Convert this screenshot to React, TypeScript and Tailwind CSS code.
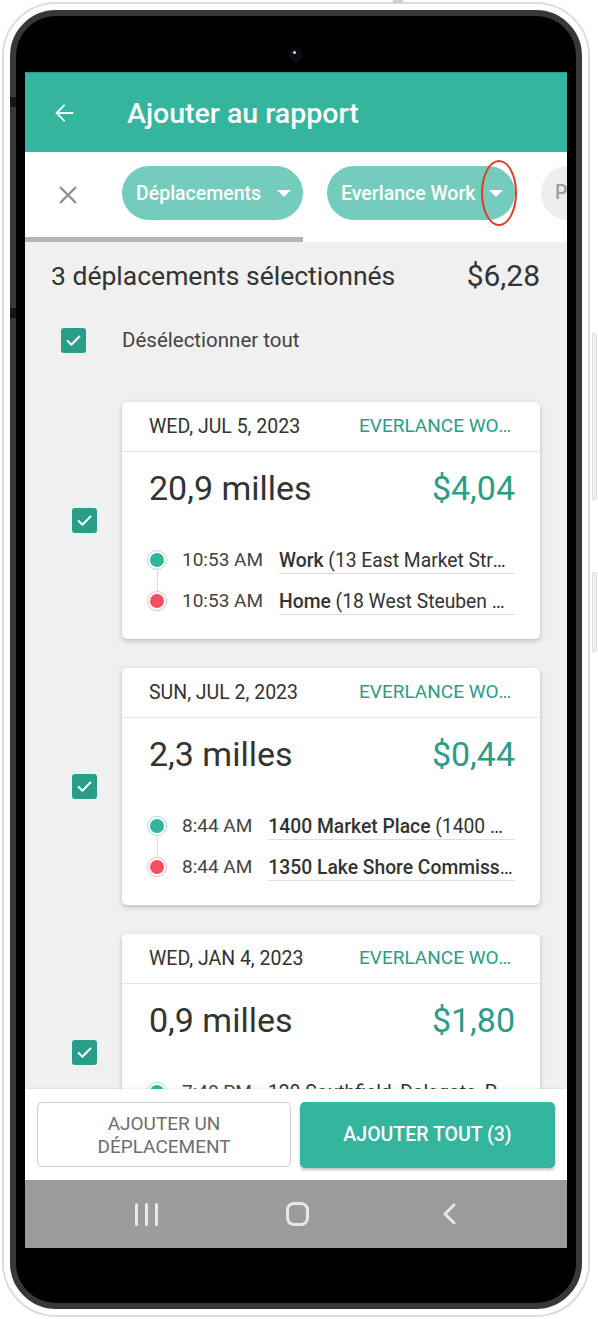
import React from 'react';

type Stop = { time: string; name: string; rest: string; kind: 'start' | 'end' };
type Trip = { date: string; tag: string; miles: string; amount: string; stops: Stop[] };

const trips: Trip[] = [
  {
    date: 'WED, JUL 5, 2023',
    tag: 'EVERLANCE WORK',
    miles: '20,9 milles',
    amount: '$4,04',
    stops: [
      { time: '10:53 AM', name: 'Work', rest: ' (13 East Market Street, Corning, NY)', kind: 'start' },
      { time: '10:53 AM', name: 'Home', rest: ' (18 West Steuben Street, Bath, NY)', kind: 'end' },
    ],
  },
  {
    date: 'SUN, JUL 2, 2023',
    tag: 'EVERLANCE WORK',
    miles: '2,3 milles',
    amount: '$0,44',
    stops: [
      { time: '8:44 AM', name: '1400 Market Place', rest: ' (1400 Market Place, Corning, NY)', kind: 'start' },
      { time: '8:44 AM', name: '1350 Lake Shore Commissary', rest: '', kind: 'end' },
    ],
  },
  {
    date: 'WED, JAN 4, 2023',
    tag: 'EVERLANCE WORK',
    miles: '0,9 milles',
    amount: '$1,80',
    stops: [
      { time: '7:40 PM', name: '', rest: '120 Southfield, Dalegate, Pennsylvania', kind: 'start' },
      { time: '7:40 PM', name: '', rest: '95 Northfield Road, Dalegate', kind: 'end' },
    ],
  },
];

const CheckBox: React.FC<{ className?: string }> = ({ className }) => (
  <div className={`flex size-[25px] shrink-0 items-center justify-center rounded-[3px] bg-[#2a9d89] ${className ?? ''}`}>
    <svg width="19" height="19" viewBox="0 0 24 24" fill="none">
      <path d="M4.5 12.5l4.8 4.8L19.5 7" stroke="white" strokeWidth="2.6" strokeLinecap="round" strokeLinejoin="round" />
    </svg>
  </div>
);

const Dot: React.FC<{ kind: 'start' | 'end' }> = ({ kind }) => (
  <div
    className={`flex size-[20px] shrink-0 items-center justify-center rounded-full border bg-white ${
      kind === 'start' ? 'border-[#a6ded3]' : 'border-[#f6b9c1]'
    }`}
  >
    <div className={`size-[14px] rounded-full ${kind === 'start' ? 'bg-[#2fb59c]' : 'bg-[#f54d62]'}`} />
  </div>
);

const TripCard: React.FC<{ trip: Trip }> = ({ trip }) => (
  <div className="flex items-center">
    <div className="flex w-[97px] shrink-0 justify-end pr-[25px]">
      <CheckBox />
    </div>
    <div className="h-[237px] w-[418px] shrink-0 rounded-[5px] bg-white shadow-[0_2px_5px_rgba(0,0,0,0.22)]">
      <div className="flex h-[50px] items-center justify-between border-b border-[#e6e6e6] pl-[27px] pr-[25px]">
        <span className="text-[19.5px] text-[#333]">{trip.date}</span>
        <span className="w-[156px] truncate text-right text-[19px] text-[#2a9d89]">{trip.tag}</span>
      </div>
      <div className="flex items-center justify-between pl-[27px] pr-[25px] pt-[16px]">
        <span className="text-[34px] leading-[40px] text-[#333]">{trip.miles}</span>
        <span className="text-[34px] leading-[40px] text-[#2a9d89]">{trip.amount}</span>
      </div>
      <div className="relative mt-[32px]">
        <div className="absolute left-[34.5px] top-[30px] h-[22px] w-px bg-[#dcdcdc]" />
        {trip.stops.map((s, i) => (
          <div key={i} className="flex h-[41px] items-center pl-[25px] pr-[25px]">
            <Dot kind={s.kind} />
            <span className="ml-[15px] shrink-0 text-[19px] leading-[22px] text-[#444]">{s.time}</span>
            <span className="ml-[16px] mt-[3px] min-w-0 flex-1 truncate border-b border-[#dedede] pb-[1px] text-[19.3px] leading-[22px] text-[#333]">
              {s.name && <span className="font-medium">{s.name}</span>}
              {s.rest}
            </span>
          </div>
        ))}
      </div>
    </div>
  </div>
);

export default function App() {
  return (
    <div className="relative h-[1319px] w-[598px] overflow-hidden bg-white font-[Roboto,sans-serif]">
      {/* side buttons of the device */}
      <div className="absolute left-[393px] top-0 h-[3px] w-[10px] bg-[#cfcfcf]" />
      <div className="absolute left-[592px] top-[333px] h-[167px] w-[5px] rounded-r-[2px] border border-[#dedede] bg-[#efefef]" />
      <div className="absolute left-[592px] top-[572px] h-[80px] w-[5px] rounded-r-[2px] border border-[#dedede] bg-[#efefef]" />

      <div className="ml-[2px] mt-[2px] h-[1315px] w-[588px] rounded-[54px] border-2 border-[#dddddd] bg-white p-[6px]">
        <div className="relative flex h-full w-full flex-col rounded-[46px] border-[6px] border-[#383838] bg-black px-[9px]">
          <div className="absolute -left-[6px] top-[81px] h-[10px] w-[6px] bg-[#161616]" />
          <div className="absolute -left-[6px] top-[292px] h-[10px] w-[6px] bg-[#161616]" />

          <div className="flex h-[56px] shrink-0 justify-center pt-[32px]">
            <div className="relative size-[14px] rounded-full bg-[#0c0c14]">
              <div className="absolute left-[4px] top-[3px] size-[3px] rounded-full bg-[#d8d8e8]" />
            </div>
          </div>

          <div className="flex h-[1176px] w-[542px] shrink-0 flex-col overflow-hidden bg-white">
            {/* app bar */}
            <div className="flex h-[80px] shrink-0 items-center border-t border-[#2c9a87] bg-[#33b59e]">
              <svg className="ml-[25px]" width="28" height="28" viewBox="0 0 24 24" fill="white">
                <path d="M20 11.1H7.6l5.5-5.5L12 4.5l-7.5 7.5 7.5 7.5 1.1-1.1-5.5-5.5H20v-1.8z" />
              </svg>
              <h1 className="ml-[49px] mt-[3px] text-[28.5px] font-medium text-white">Ajouter au rapport</h1>
            </div>

            {/* filters */}
            <div className="relative h-[90px] shrink-0 bg-white">
              <div className="flex items-center pl-[33px] pt-[14px]">
                <svg width="20" height="20" viewBox="0 0 20 20" className="mt-[4px] shrink-0">
                  <path d="M2 2L18 18M18 2L2 18" stroke="#8c8c8c" strokeWidth="2.2" />
                </svg>
                <div className="ml-[44px] flex h-[54px] w-[181px] shrink-0 items-center justify-between rounded-full bg-[#74cdbc] pl-[14px] pr-[12px]">
                  <span className="mt-[2px] text-[19.5px] font-medium text-white">Déplacements</span>
                  <span className="h-0 w-0 border-x-[7px] border-t-[7px] border-x-transparent border-t-white" />
                </div>
                <div className="ml-[24px] flex h-[54px] w-[188px] shrink-0 items-center justify-between rounded-full bg-[#74cdbc] pl-[14px] pr-[12px]">
                  <span className="mt-[2px] text-[19.5px] font-medium text-white">Everlance Work</span>
                  <span className="h-0 w-0 border-x-[7px] border-t-[7px] border-x-transparent border-t-white" />
                </div>
                <div className="ml-[26px] flex h-[54px] w-[120px] shrink-0 items-center rounded-full bg-[#eeeeee] pl-[14px]">
                  <span className="text-[19.5px] font-medium text-[#a0a0a0]">Personnel</span>
                </div>
              </div>
              <div className="mt-[17px] h-[5px] w-[278px] bg-[#b4b4b4]" />
              <div className="absolute left-[456px] top-[8px] h-[66px] w-[36px] rounded-[50%] border-[2.5px] border-[#e8361f]" />
            </div>

            {/* list */}
            <div className="flex min-h-0 flex-1 flex-col overflow-hidden bg-[#f0f0f0]">
              <div className="flex items-center justify-between pl-[26px] pr-[27px] pt-[17px]">
                <span className="text-[26.5px] leading-[34px] text-[#333]">3 déplacements sélectionnés</span>
                <span className="text-[30px] leading-[34px] text-[#333]">$6,28</span>
              </div>
              <div className="mt-[32px] flex items-center pl-[36px]">
                <CheckBox />
                <span className="ml-[36px] text-[20.5px] text-[#444]">Désélectionner tout</span>
              </div>
              <div className="mt-[46px] flex flex-col gap-[29px]">
                {trips.map((t) => (
                  <TripCard key={t.date} trip={t} />
                ))}
              </div>
            </div>

            {/* actions */}
            <div className="flex h-[91px] shrink-0 gap-[9px] bg-white px-[12px] pt-[13px] shadow-[0_-1px_2px_rgba(0,0,0,0.08)]">
              <button className="flex h-[65px] w-[254px] flex-col items-center justify-center rounded-[5px] border-[1.5px] border-[#cfcfcf] bg-white text-[19px] leading-[23px] text-[#6e6e6e]">
                <span>AJOUTER UN</span>
                <span>DÉPLACEMENT</span>
              </button>
              <button className="flex h-[66px] w-[255px] items-center justify-center rounded-[5px] bg-[#33b59e] text-[19.5px] font-medium text-white shadow-[0_2px_3px_rgba(0,0,0,0.25)]">
                AJOUTER TOUT (3)
              </button>
            </div>

            {/* system nav */}
            <div className="flex h-[68px] shrink-0 items-center justify-between bg-[#9b9b9b] pl-[96px] pr-[93px]">
              <div className="flex w-[50px] justify-center gap-[7px]">
                <span className="h-[23px] w-[3px] rounded-full bg-[#e8e8e8]" />
                <span className="h-[23px] w-[3px] rounded-full bg-[#e8e8e8]" />
                <span className="h-[23px] w-[3px] rounded-full bg-[#e8e8e8]" />
              </div>
              <div className="flex w-[50px] justify-center">
                <span className="h-[24px] w-[23px] rounded-[8px] border-[3px] border-[#e8e8e8]" />
              </div>
              <div className="flex w-[50px] justify-center">
                <svg width="16" height="22" viewBox="0 0 16 22" fill="none">
                  <path d="M13 2L4 11l9 9" stroke="#e8e8e8" strokeWidth="3" strokeLinecap="round" strokeLinejoin="round" />
                </svg>
              </div>
            </div>
          </div>
        </div>
      </div>
    </div>
  );
}
